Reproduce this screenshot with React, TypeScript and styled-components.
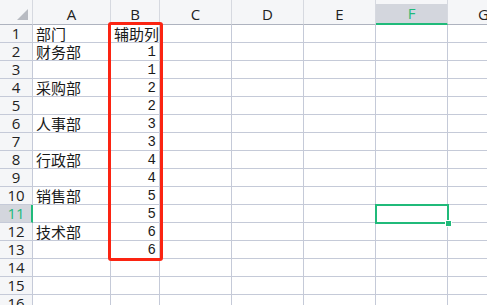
import React from "react";
import styled, { createGlobalStyle } from "styled-components";

const GlobalStyle = createGlobalStyle`
    html, body {
        margin: 0;
        padding: 0;
        background: #fff;
        overflow: hidden;
    }
`;

const GRID = "#c5cad8";
const GREEN = "#20ba7a";
const colWidths = [33, 78, 49, 72, 72, 72, 72, 72];
const letters = ["A", "B", "C", "D", "E", "F", "G"];

// dept in column A, helper value in column B
const rows: { dept?: string; num?: string }[] = [
    { dept: "部门", num: "辅助列" },
    { dept: "财务部", num: "1" },
    { num: "1" },
    { dept: "采购部", num: "2" },
    { num: "2" },
    { dept: "人事部", num: "3" },
    { num: "3" },
    { dept: "行政部", num: "4" },
    { num: "4" },
    { dept: "销售部", num: "5" },
    { num: "5" },
    { dept: "技术部", num: "6" },
    { num: "6" },
    {},
    {},
    {},
];

const Sheet = styled.div`
    position: relative;
    width: 487px;
    height: 305px;
    overflow: hidden;
    font-family: "Noto Sans CJK SC", "Noto Sans", sans-serif;
    color: #1a1a1a;
`;

const Grid = styled.div`
    display: grid;
    grid-template-columns: ${colWidths.map((w) => w + "px").join(" ")};
    grid-template-rows: 25px;
    grid-auto-rows: 18px;
`;

const Corner = styled.div`
    position: relative;
    background: #f5f6f8;
    border-right: 1px solid #d6d9e0;
    border-bottom: 1px solid #aeb3bf;

    &::after {
        content: "";
        position: absolute;
        right: 4px;
        bottom: 4px;
        width: 0;
        height: 0;
        border-left: 11px solid transparent;
        border-bottom: 11px solid #b8bbc2;
    }
`;

const ColHead = styled.div<{ $active?: boolean }>`
    display: flex;
    align-items: center;
    justify-content: center;
    padding-top: 4px;
    background: linear-gradient(
        to bottom,
        #f5f6f8 0 4px,
        ${(p) => (p.$active ? "#d3d6dd" : "#f5f6f8")} 4px
    );
    border-right: 1px solid #d6d9e0;
    border-bottom: ${(p) => (p.$active ? `2px solid ${GREEN}` : "1px solid #aeb3bf")};
    font-family: "Open Sans", "Noto Sans", sans-serif;
    font-size: 15px;
    line-height: 1;
    color: ${(p) => (p.$active ? GREEN : "#222")};
`;

const RowHead = styled.div<{ $active?: boolean }>`
    display: flex;
    align-items: center;
    justify-content: center;
    background: ${(p) => (p.$active ? "#d3d6dd" : "#f5f6f8")};
    border-right: ${(p) => (p.$active ? `2px solid ${GREEN}` : `1px solid ${GRID}`)};
    border-bottom: 1px solid ${GRID};
    font-family: "Open Sans", "Noto Sans", sans-serif;
    font-size: 15px;
    line-height: 1;
    color: ${(p) => (p.$active ? GREEN : "#222")};
    padding-left: ${(p) => (p.$active ? "1px" : "0")};
`;

const Cell = styled.div<{ $align?: "left" | "right"; $mono?: boolean }>`
    display: flex;
    align-items: center;
    justify-content: ${(p) => (p.$align === "right" ? "flex-end" : "flex-start")};
    padding: ${(p) => (p.$align === "right" ? "0 3px 0 0" : "0 0 0 3px")};
    border-right: 1px solid ${GRID};
    border-bottom: 1px solid ${GRID};
    font-size: ${(p) => (p.$mono ? "14px" : "15px")};
    line-height: 1;
    font-family: ${(p) =>
        p.$mono
            ? `"Liberation Mono", "Noto Sans CJK SC", monospace`
            : `"Noto Sans CJK SC", sans-serif`};
    white-space: nowrap;
    overflow: hidden;
`;

const RedBox = styled.div`
    position: absolute;
    left: 108px;
    top: 22px;
    width: 49px;
    height: 233px;
    border: 3px solid #fb2412;
    border-radius: 3px;
    pointer-events: none;
`;

const Selection = styled.div`
    position: absolute;
    left: 375px;
    top: 204px;
    width: 70px;
    height: 16px;
    border: 2px solid ${GREEN};
    pointer-events: none;

    &::after {
        content: "";
        position: absolute;
        right: -5px;
        bottom: -5px;
        width: 5px;
        height: 5px;
        background: ${GREEN};
        border: 1px solid #fff;
    }
`;

export default function App() {
    return (
        <Sheet>
            <GlobalStyle />
            <Grid>
                <Corner />
                {letters.map((l) => (
                    <ColHead key={l} $active={l === "F"}>
                        {l}
                    </ColHead>
                ))}
                {rows.map((r, i) => (
                    <React.Fragment key={i}>
                        <RowHead $active={i === 10}>{i + 1}</RowHead>
                        <Cell>{r.dept}</Cell>
                        <Cell $align={i > 0 ? "right" : "left"} $mono={i > 0}>
                            {r.num}
                        </Cell>
                        {[0, 1, 2, 3, 4].map((c) => (
                            <Cell key={c} />
                        ))}
                    </React.Fragment>
                ))}
            </Grid>
            <RedBox />
            <Selection />
        </Sheet>
    );
}
